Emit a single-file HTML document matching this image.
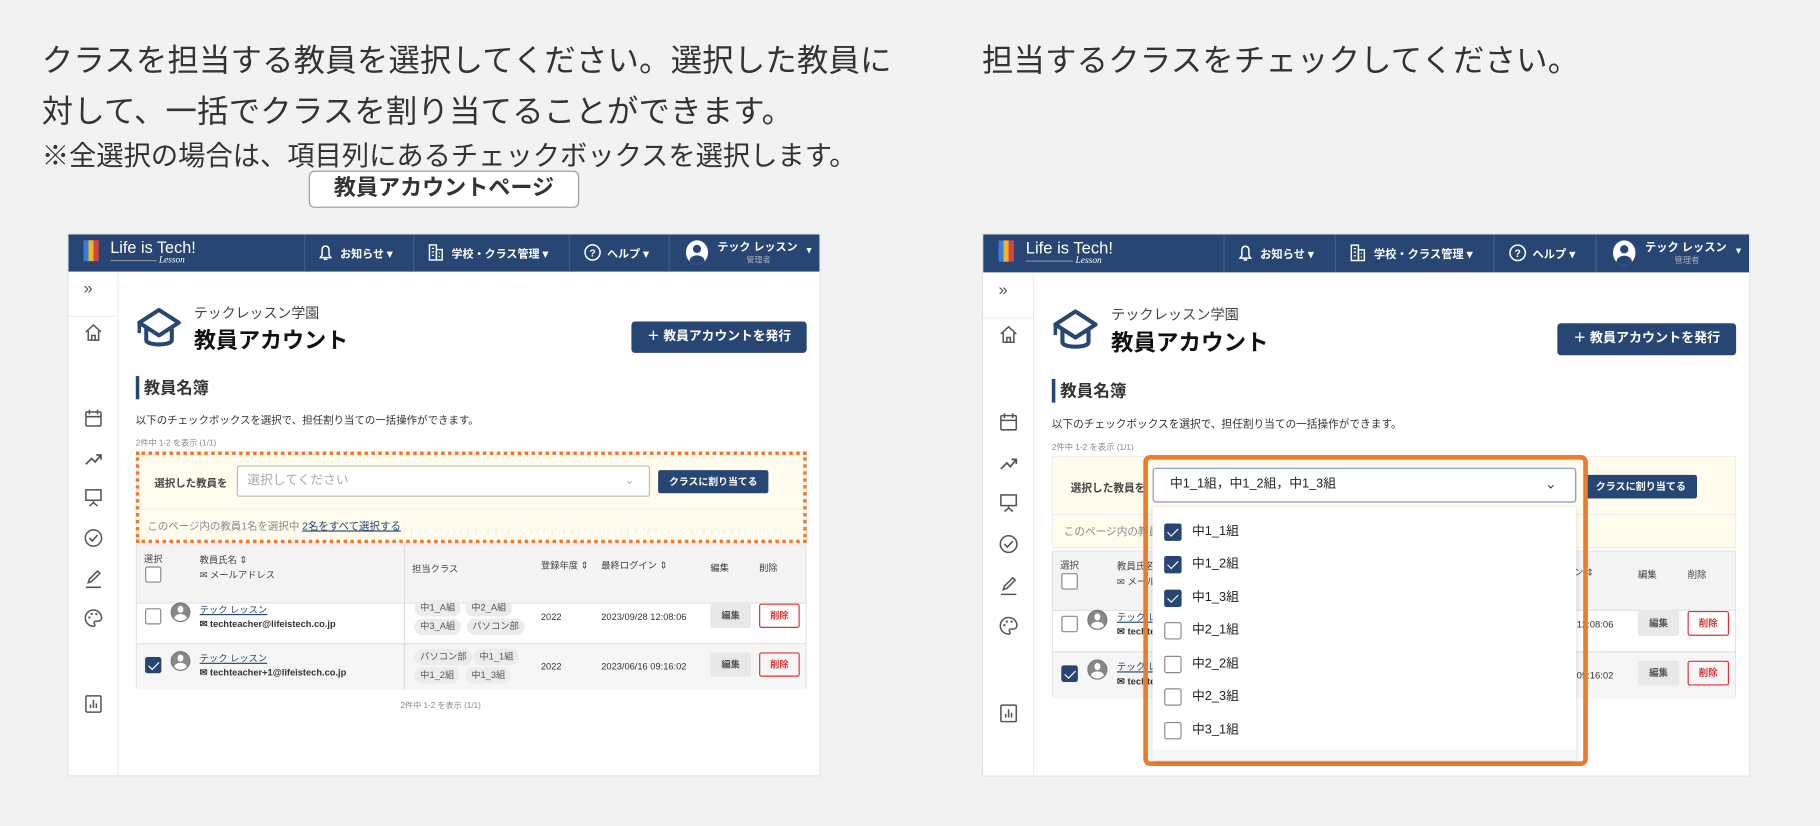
<!DOCTYPE html>
<html lang="ja"><head><meta charset="utf-8"><style>
*{box-sizing:border-box;margin:0;padding:0}
body{width:1820px;height:826px;overflow:hidden;background:#f2f2f2;font-family:"Liberation Sans","Noto Sans CJK JP",sans-serif;color:#222}
#w{position:absolute;left:0;top:0;width:1568px;height:712px;transform:scale(1.1607);transform-origin:0 0}
.a{position:absolute;white-space:nowrap}
.big{font-size:27px;color:#333;letter-spacing:.2px}
.panel{position:absolute;width:649px;height:468px;background:#fff;border:1px solid #e3e3e3;overflow:hidden;transform-origin:0 0}
.nav{position:absolute;left:0;top:0;width:100%;height:32px;background:#284673;color:#fff;font-size:9.5px;font-weight:bold}
.sep{position:absolute;top:0;width:1px;height:32px;background:#3e5d8a}
.side{position:absolute;left:0;top:32px;width:43px;height:436px;border-right:1px solid #eee}
.ic{position:absolute;left:13px;width:17px;height:17px}
.chip{position:absolute;height:14px;background:#ececec;border-radius:7px;font-size:8px;color:#555;line-height:14px;padding:0 5px}
.cb{position:absolute;width:14px;height:14px;border:1px solid #888;border-radius:2px;background:#fff}
.cbon{background:#284673;border-color:#284673}
.cbon::after{content:"";position:absolute;left:4px;top:1px;width:4px;height:8px;border:solid #fff;border-width:0 1.6px 1.6px 0;transform:rotate(45deg)}
.t8{font-size:8px}.t9{font-size:9px}.t10{font-size:10px}
.btnE{position:absolute;width:35px;height:21px;background:#e8e8e8;border-radius:2px;font-size:8px;color:#555;text-align:center;line-height:21px;font-weight:bold}
.btnD{position:absolute;width:35px;height:21px;border:1px solid #d33;border-radius:2px;font-size:8px;color:#d33;text-align:center;line-height:19px;font-weight:bold}
.av{position:absolute;width:17px;height:17px;border-radius:50%;background:#888;border:1.5px solid #777;overflow:hidden}
.av::before{content:"";position:absolute;left:5px;top:2px;width:5px;height:6px;border-radius:50%;background:#fff}
.av::after{content:"";position:absolute;left:2px;top:9px;width:11px;height:8px;border-radius:50%;background:#fff}
.lnk{color:#284673;text-decoration:underline}
.ddi{position:absolute;left:10px;font-size:11px;color:#222}
</style></head><body><div id="w">

<div class="a big" style="left:36px;top:30px">クラスを担当する教員を選択してください。選択した教員に</div>
<div class="a big" style="left:36px;top:74px">対して、一括でクラスを割り当てることができます。</div>
<div class="a" style="left:36px;top:115px;font-size:23.5px;color:#333">※全選択の場合は、項目列にあるチェックボックスを選択します。</div>
<div class="a" style="left:266px;top:147px;width:233px;height:32px;border:1.5px solid #999;border-radius:5px;background:#fff;font-size:19px;font-weight:bold;text-align:center;line-height:29px;color:#333">教員アカウントページ</div>
<div class="a big" style="left:846px;top:30px">担当するクラスをチェックしてください。</div>

<div class="panel" style="left:58px;top:201px" id="p1">
 <div class="nav">
  <div class="a" style="left:13px;top:5px;width:13px;height:18px;background:linear-gradient(90deg,#3a7be0 0 33%,#e8b923 33% 66%,#d94040 66%)"></div>
  <div class="a" style="left:36px;top:3px;font-size:14px;font-weight:normal">Life is Tech!</div>
  <div class="a" style="left:36px;top:22px;width:40px;height:1px;background:#889"></div>
  <div class="a" style="left:78px;top:17px;font-size:8px;font-style:italic;font-weight:normal;font-family:'Liberation Serif',serif">Lesson</div>
  <div class="sep" style="left:203px"></div><div class="sep" style="left:297px"></div><div class="sep" style="left:431px"></div><div class="sep" style="left:517px"></div>
  <svg class="a" style="left:216px;top:9px" width="11" height="14" viewBox="0 0 11 14"><path d="M5.5 1C3 1 2.5 3 2.5 5v4L1 11h9L8.5 9V5c0-2-.5-4-3-4zM4 12.5h3" stroke="#fff" stroke-width="1.3" fill="none"/></svg>
  <div class="a" style="left:234px;top:9px">お知らせ ▾</div>
  <svg class="a" style="left:310px;top:8px" width="13" height="15" viewBox="0 0 13 15"><rect x="1" y="1" width="6" height="13" stroke="#fff" fill="none" stroke-width="1.2"/><rect x="7" y="5" width="5" height="9" stroke="#fff" fill="none" stroke-width="1.2"/><path d="M3 4h2M3 7h2M3 10h2M9 8h1M9 11h1" stroke="#fff"/></svg>
  <div class="a" style="left:330px;top:9px">学校・クラス管理 ▾</div>
  <svg class="a" style="left:444px;top:8px" width="15" height="15" viewBox="0 0 15 15"><circle cx="7.5" cy="7.5" r="6.5" stroke="#fff" fill="none" stroke-width="1.3"/><text x="7.5" y="11" font-size="9" fill="#fff" text-anchor="middle" font-family="Liberation Sans">?</text></svg>
  <div class="a" style="left:464px;top:9px">ヘルプ ▾</div>
  <div class="a" style="left:532px;top:5px;width:19px;height:21px;border-radius:50%;background:#fff;overflow:hidden"><div class="a" style="left:6px;top:4px;width:7px;height:7px;border-radius:50%;background:#284673"></div><div class="a" style="left:3px;top:13px;width:13px;height:10px;border-radius:50%;background:#284673"></div></div>
  <div class="a" style="left:559px;top:3px;font-size:9.5px">テック レッスン</div>
  <div class="a" style="left:584px;top:17px;font-size:7px;color:#aab;font-weight:normal">管理者</div>
  <div class="a" style="left:636px;top:9px;font-size:8px">▾</div>
 </div>
 <div class="side">
  <div class="a" style="left:13px;top:6px;font-size:14px;color:#555">»</div>
  <div class="a" style="left:0;top:38px;width:43px;height:1px;background:#eee"></div>
  <svg class="ic" style="top:44px" viewBox="0 0 17 17"><path d="M2 8L8.5 2 15 8M4 7v8h9V7M7 15v-4h3v4" stroke="#555" stroke-width="1.3" fill="none"/></svg>
  <svg class="ic" style="top:118px" viewBox="0 0 17 17"><rect x="2" y="3" width="13" height="12" rx="1" stroke="#555" stroke-width="1.3" fill="none"/><path d="M2 7h13M5 1v4M12 1v4" stroke="#555" stroke-width="1.3"/></svg>
  <svg class="ic" style="top:153px" viewBox="0 0 17 17"><path d="M2 13l5-5 3 3 5-6M11 5h4v4" stroke="#555" stroke-width="1.5" fill="none"/></svg>
  <svg class="ic" style="top:186px" viewBox="0 0 17 17"><rect x="2" y="2" width="13" height="9" stroke="#555" stroke-width="1.3" fill="none"/><path d="M8.5 11v3M5 16l3.5-3 3.5 3" stroke="#555" stroke-width="1.3" fill="none"/></svg>
  <svg class="ic" style="top:221px" viewBox="0 0 17 17"><circle cx="8.5" cy="8.5" r="7" stroke="#555" stroke-width="1.3" fill="none"/><path d="M5 8.5l2.5 2.5 4.5-5" stroke="#555" stroke-width="1.4" fill="none"/></svg>
  <svg class="ic" style="top:256px" viewBox="0 0 17 17"><path d="M4 12l1-3 7-7 2 2-7 7zM2 16h13" stroke="#555" stroke-width="1.3" fill="none"/></svg>
  <svg class="ic" style="top:290px" viewBox="0 0 17 17"><path d="M8.5 1.5a7 7 0 1 0 0 14c1.5 0 1.5-1.5.8-2.3-.6-.8 0-2 1.2-2h2c1.8 0 3-1.2 3-3 0-3.6-3.2-6.7-7-6.7z" stroke="#555" stroke-width="1.3" fill="none"/><circle cx="5" cy="8" r="1" fill="#555"/><circle cx="7" cy="5" r="1" fill="#555"/><circle cx="11" cy="5" r="1" fill="#555"/></svg>
  <svg class="ic" style="top:364px" viewBox="0 0 17 17"><rect x="2" y="1.5" width="13" height="14" rx="1" stroke="#555" stroke-width="1.3" fill="none"/><path d="M6 12V9M8.5 12V5M11 12V8" stroke="#555" stroke-width="1.3"/></svg>
 </div>
 <svg class="a" style="left:58px;top:62px" width="40" height="38" viewBox="0 0 40 38"><path d="M20 3L3 14l17 11 17-11z" stroke="#284673" stroke-width="3.5" fill="none" stroke-linejoin="round"/><path d="M9 19v10c0 5 22 5 22 0V19" stroke="#284673" stroke-width="3.5" fill="none"/><path d="M3 14v9" stroke="#284673" stroke-width="3"/></svg>
 <div class="a" style="left:108px;top:59px;font-size:12px;color:#444">テックレッスン学園</div>
 <div class="a" style="left:108px;top:77px;font-size:19px;font-weight:bold;color:#111">教員アカウント</div>
 <div class="a" style="left:485px;top:75px;width:151px;height:27px;background:#284673;border-radius:3px;color:#fff;font-size:11px;font-weight:bold;text-align:center;line-height:27px">＋ 教員アカウントを発行</div>
 <div class="a" style="left:58px;top:122px;width:3px;height:20px;background:#284673"></div>
 <div class="a" style="left:65px;top:122px;font-size:14px;font-weight:bold;color:#333">教員名簿</div>
 <div class="a t9" style="left:58px;top:153px;color:#333">以下のチェックボックスを選択で、担任割り当ての一括操作ができます。</div>
 <div class="a" style="left:58px;top:175px;font-size:7px;color:#888">2件中 1-2 を表示 (1/1)</div>
 <div class="yb a" style="left:58px;top:187px;width:578px;height:78px;background:#fffcee;border:1px solid #eee">
  <div class="a" style="left:15px;top:19px;font-size:9px;font-weight:bold;color:#444">選択した教員を</div>
  <div class="a" style="left:86px;top:11px;width:356px;height:27px;background:#fff;border:1px solid #bbb;border-radius:2px;font-size:11px;color:#aaa;line-height:25px;padding-left:8px">選択してください<span style="position:absolute;right:12px;color:#bbb">⌄</span></div>
  <div class="a" style="left:449px;top:15px;width:95px;height:20px;background:#284673;border-radius:2px;color:#fff;font-size:8.5px;font-weight:bold;text-align:center;line-height:20px">クラスに割り当てる</div>
  <div class="a" style="left:0;top:48px;width:100%;height:1px;background:#eee"></div>
  <div class="a t9" style="left:9px;top:56px;color:#888">このページ内の教員1名を選択中 <span class="lnk">2名をすべて選択する</span></div>
 </div>
 <div class="a" style="left:58px;top:267px;width:578px;height:124px;border:1px solid #e3e3e3;background:#fff">
  <div class="a" style="left:0;top:0;width:100%;height:50px;background:#f4f4f5;border-bottom:1px solid #e3e3e3"></div>
  <div class="a" style="left:0;top:84px;width:100%;height:40px;background:#f6f6f7;border-top:1px solid #e3e3e3"></div>
  <div class="a" style="left:230px;top:0;width:1px;height:124px;background:#ddd"></div>
  <div class="a t8" style="left:6px;top:6px;color:#444">選択</div>
  <div class="cb" style="left:7px;top:18px"></div>
  <div class="a t8" style="left:54px;top:7px;color:#444">教員氏名 ⇕</div>
  <div class="a t8" style="left:54px;top:20px;color:#444">✉ メールアドレス</div>
  <div class="a t8" style="left:237px;top:15px;color:#444">担当クラス</div>
  <div class="a t8" style="left:348px;top:12px;color:#444">登録年度 ⇕</div>
  <div class="a t8" style="left:400px;top:12px;color:#444">最終ログイン ⇕</div>
  <div class="a t8" style="left:494px;top:14px;color:#444">編集</div>
  <div class="a t8" style="left:536px;top:14px;color:#444">削除</div>
  <div class="cb" style="left:7px;top:54px"></div>
  <div class="av" style="left:29px;top:49px"></div>
  <div class="a t8 lnk" style="left:54px;top:50px">テック レッスン</div>
  <div class="a t8" style="left:54px;top:63px;color:#333;font-weight:bold">✉ techteacher@lifeistech.co.jp</div>
  <div class="chip" style="left:239px;top:47px">中1_A組</div><div class="chip" style="left:283px;top:47px">中2_A組</div>
  <div class="chip" style="left:239px;top:63px">中3_A組</div><div class="chip" style="left:284px;top:63px">パソコン部</div>
  <div class="a t8" style="left:348px;top:57px;color:#333">2022</div>
  <div class="a t8" style="left:400px;top:57px;color:#333">2023/09/28 12:08:06</div>
  <div class="btnE" style="left:494px;top:50px">編集</div><div class="btnD" style="left:536px;top:50px">削除</div>
  <div class="cb cbon" style="left:7px;top:96px"></div>
  <div class="av" style="left:29px;top:91px"></div>
  <div class="a t8 lnk" style="left:54px;top:92px">テック レッスン</div>
  <div class="a t8" style="left:54px;top:105px;color:#333;font-weight:bold">✉ techteacher+1@lifeistech.co.jp</div>
  <div class="chip" style="left:239px;top:89px">パソコン部</div><div class="chip" style="left:290px;top:89px">中1_1組</div>
  <div class="chip" style="left:239px;top:105px">中1_2組</div><div class="chip" style="left:283px;top:105px">中1_3組</div>
  <div class="a t8" style="left:348px;top:100px;color:#333">2022</div>
  <div class="a t8" style="left:400px;top:100px;color:#333">2023/06/16 09:16:02</div>
  <div class="btnE" style="left:494px;top:92px">編集</div><div class="btnD" style="left:536px;top:92px">削除</div>
 </div>
 <div class="a" style="left:286px;top:401px;font-size:7px;color:#888">2件中 1-2 を表示 (1/1)</div>
 <div class="dot a" style="left:58px;top:187px;width:578px;height:79px;border:3px dotted #f07a2a"></div>
</div>

<div id="p2host"></div>

<div class="a ov" style="left:985px;top:392px;width:383px;height:268px;border:4px solid #f07a2a;border-radius:6px"></div>
<div class="a ov" style="left:993px;top:403px;width:365px;height:30px;background:#fff;border:1.5px solid #7c9ad6;border-radius:3px;font-size:11px;color:#222;line-height:27px;padding-left:14px">中1_1組，中1_2組，中1_3組<span style="position:absolute;right:16px;font-size:12px;color:#444">⌄</span></div>
<div class="a ov" style="left:993px;top:437px;width:365px;height:218px;background:#fff;box-shadow:0 1px 4px rgba(0,0,0,.2);overflow:hidden">
 <div class="cb cbon" style="left:10px;top:14px;width:15px;height:15px"></div><div class="ddi" style="left:34px;top:12px">中1_1組</div>
 <div class="cb cbon" style="left:10px;top:42px;width:15px;height:15px"></div><div class="ddi" style="left:34px;top:40px">中1_2組</div>
 <div class="cb cbon" style="left:10px;top:71px;width:15px;height:15px"></div><div class="ddi" style="left:34px;top:69px">中1_3組</div>
 <div class="cb" style="left:10px;top:99px;width:15px;height:15px"></div><div class="ddi" style="left:34px;top:97px">中2_1組</div>
 <div class="cb" style="left:10px;top:128px;width:15px;height:15px"></div><div class="ddi" style="left:34px;top:126px">中2_2組</div>
 <div class="cb" style="left:10px;top:156px;width:15px;height:15px"></div><div class="ddi" style="left:34px;top:154px">中2_3組</div>
 <div class="cb" style="left:10px;top:185px;width:15px;height:15px"></div><div class="ddi" style="left:34px;top:183px">中3_1組</div>
 <div class="a" style="left:0;top:209px;width:100%;height:9px;background:#f5f6f8"></div>
</div>
</div>
<script>
var p=document.getElementById('p1').cloneNode(true);
p.id='p2';p.style.left='846px';p.style.top='201px';p.style.transform='scale(1.02)';p.style.height='459px';
p.querySelector('.dot').remove();
p.querySelectorAll('.a').forEach(function(e){if(e.textContent.indexOf('2件中')==0&&e.style.top=='401px')e.remove();});
document.getElementById('p2host').replaceWith(p);
var w=document.getElementById('w');
Array.prototype.slice.call(document.querySelectorAll('#w > .ov')).forEach(function(e){w.appendChild(e)});
</script>
</body></html>
